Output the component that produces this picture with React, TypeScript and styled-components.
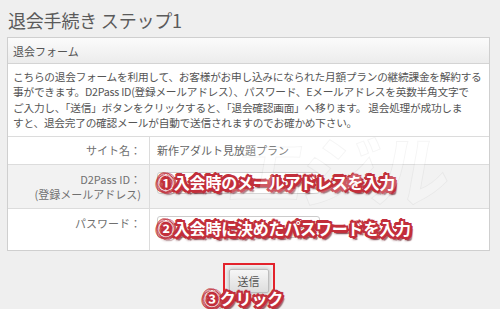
import styled, { createGlobalStyle } from "styled-components";

const GlobalStyle = createGlobalStyle`
  html, body {
    margin: 0;
    padding: 0;
    background: #efefef;
  }
  body {
    font-family: "Noto Sans CJK JP", "Noto Sans", sans-serif;
    color: #444;
  }
`;

const Page = styled.div`
  width: 500px;
  height: 309px;
  overflow: hidden;
  box-sizing: border-box;
  padding: 8px 0 0 7px;
  position: relative;
`;

const Title = styled.h1`
  margin: 0 0 5px 1px;
  font-size: 18px;
  line-height: 24px;
  font-weight: 400;
  color: #5a5a5a;
  letter-spacing: -0.2px;
`;

const Panel = styled.div`
  width: 483px;
  box-sizing: border-box;
  border: 1px solid #cfcfcf;
  background: #fff;
  position: relative;
`;

const PanelHeader = styled.div`
  height: 26px;
  box-sizing: border-box;
  padding-left: 5px;
  display: flex;
  align-items: center;
  font-size: 11px;
  color: #555;
  background: linear-gradient(#fbfbfb, #ececec);
  border-bottom: 1px solid #d4d4d4;
`;

const Intro = styled.p`
  margin: 0;
  padding: 5px 5px 5px 5px;
  font-size: 10.7px;
  line-height: 15.4px;
  color: #555;
  white-space: nowrap;
  letter-spacing: -0.25px;
`;

const Row = styled.div<{ $shade?: boolean; $h: number }>`
  display: grid;
  grid-template-columns: 142px 1fr;
  height: ${(p) => p.$h}px;
  box-sizing: border-box;
  border-top: 1px solid #dcdcdc;
  background: ${(p) => (p.$shade ? "#f2f2f2" : "#fff")};
`;

const Label = styled.div<{ $top?: boolean }>`
  border-right: 1px solid #dcdcdc;
  padding: ${(p) => (p.$top ? "7px 8px 0 0" : "0 8px 0 0")};
  display: flex;
  flex-direction: column;
  justify-content: ${(p) => (p.$top ? "flex-start" : "center")};
  align-items: flex-end;
  font-size: 11px;
  line-height: 15px;
  color: #707070;
  text-align: right;
`;

const Value = styled.div`
  position: relative;
  padding: 7px 0 0 7px;
  font-size: 11px;
  color: #666;
`;

const PlainValue = styled(Value)`
  padding-top: 0;
  display: flex;
  align-items: center;
`;

const Input = styled.input`
  width: 163px;
  height: 22px;
  box-sizing: border-box;
  border: 1px solid #ccc;
  border-radius: 3px;
  background: #fff;
  margin: 0;
`;

const Note = styled.span<{ $top: number; $left: number }>`
  position: absolute;
  top: ${(p) => p.$top}px;
  left: ${(p) => p.$left}px;
  white-space: nowrap;
  font-family: "Noto Sans CJK JP", sans-serif;
  font-weight: 700;
  font-size: 16px;
  line-height: 16px;
  color: #fff;
  letter-spacing: -0.2px;
  text-shadow:
    2px 0 0 #c22f3b, -2px 0 0 #c22f3b, 0 2px 0 #c22f3b, 0 -2px 0 #c22f3b,
    2px 2px 0 #c22f3b, -2px -2px 0 #c22f3b, 2px -2px 0 #c22f3b, -2px 2px 0 #c22f3b,
    3px 1px 0 #c22f3b, -3px 1px 0 #c22f3b, 1px 3px 0 #c22f3b, -1px -3px 0 #c22f3b,
    3px 4px 1px rgba(90, 10, 20, 0.55), 1px 4px 2px rgba(90, 10, 20, 0.45);
`;

const Watermark = styled.div`
  position: absolute;
  left: 222px;
  top: 84px;
  font-size: 78px;
  line-height: 90px;
  font-weight: 700;
  color: rgba(255, 255, 255, 0.2);
  -webkit-text-stroke: 1px rgba(0, 0, 0, 0.045);
  transform: skewX(-10deg);
  pointer-events: none;
  letter-spacing: -6px;
`;

const Footer = styled.div`
  width: 483px;
  display: flex;
  justify-content: center;
  padding-top: 12px;
  position: relative;
`;

const Highlight = styled.div`
  width: 52px;
  height: 38px;
  box-sizing: border-box;
  border: 2px solid #e3232c;
  display: flex;
  justify-content: center;
  padding-top: 4px;
`;

const SubmitButton = styled.button`
  width: 40px;
  height: 24px;
  box-sizing: border-box;
  border: 1px solid #bdbdbd;
  border-radius: 2px;
  background: linear-gradient(#f6f6f6, #dedede);
  box-shadow: 0 0 4px rgba(0, 0, 0, 0.25);
  font-family: "Noto Sans CJK JP", sans-serif;
  font-size: 11px;
  line-height: 14px;
  color: #555;
  padding: 0;
`;

export default function App() {
  return (
    <>
      <GlobalStyle />
      <Page>
        <Title>退会手続き ステップ1</Title>
        <Panel>
          <PanelHeader>退会フォーム</PanelHeader>
          <Intro>
            こちらの退会フォームを利用して、お客様がお申し込みになられた月額プランの継続課金を解約する
            <br />
            事ができます。D2Pass ID(登録メールアドレス）、パスワード、Eメールアドレスを英数半角文字で
            <br />
            ご入力し、「送信」ボタンをクリックすると、「退会確認画面」へ移ります。 退会処理が成功しま
            <br />
            すと、退会完了の確認メールが自動で送信されますのでお確かめ下さい。
          </Intro>
          <Row $h={28}>
            <Label>サイト名：</Label>
            <PlainValue>新作アダルト見放題プラン</PlainValue>
          </Row>
          <Row $h={44} $shade>
            <Label $top>
              <span>D2Pass ID：</span>
              <span>(登録メールアドレス)</span>
            </Label>
            <Value>
              <Input type="text" />
              <Note $top={9} $left={8}>①入会時のメールアドレスを入力</Note>
            </Value>
          </Row>
          <Row $h={42}>
            <Label $top>パスワード：</Label>
            <Value>
              <Input type="password" />
              <Note $top={11} $left={8}>②入会時に決めたパスワードを入力</Note>
            </Value>
          </Row>
          <Watermark>エジル</Watermark>
        </Panel>
        <Footer>
          <Highlight>
            <SubmitButton type="button">送信</SubmitButton>
          </Highlight>
          <Note $top={39} $left={197}>③クリック</Note>
        </Footer>
      </Page>
    </>
  );
}
